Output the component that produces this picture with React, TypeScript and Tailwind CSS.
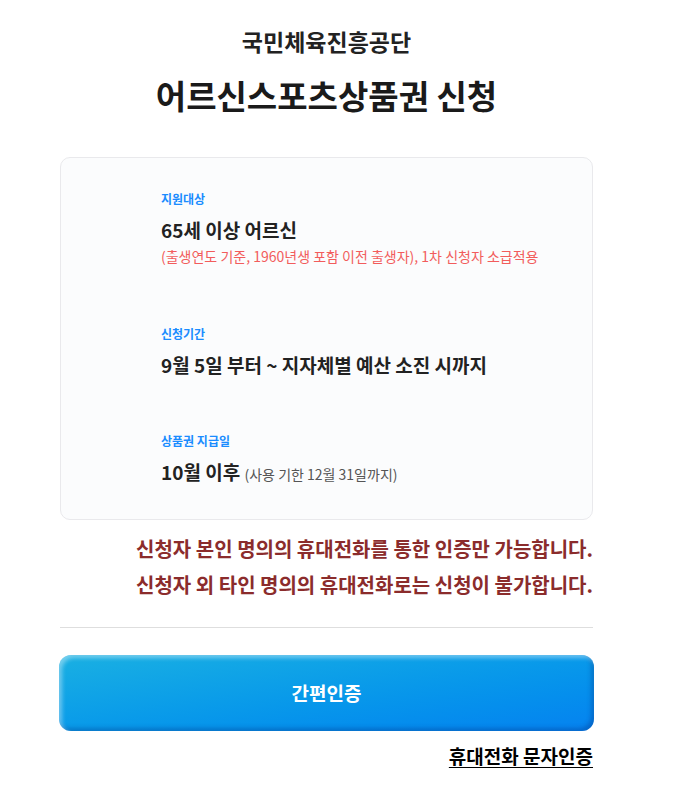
const font = { fontFamily: '"Noto Sans CJK KR", "Noto Sans", sans-serif' }

const App = () => {
  return (
    <div className="min-h-screen bg-white text-[#222]" style={font}>
      <div className="ml-[60px] w-[533px] pt-[26px] pb-[30px]">
        <h2 className="text-center text-[23px] leading-[30px] font-bold text-[#222]">국민체육진흥공단</h2>
        <h1 className="mt-[17px] text-center text-[33px] leading-[44px] font-bold text-[#1a1a1a]">
          어르신스포츠상품권 신청
        </h1>

        <div className="mt-[40px] rounded-[10px] border border-[#e9e9ec] bg-[#fbfcfd] pt-[32px] pb-[32px] pl-[100px]">
          <div>
            <p className="text-[12px] leading-[18px] font-bold text-[#1a8cff]">지원대상</p>
            <p className="mt-[9px] text-[19px] leading-[26px] font-bold text-[#222]">65세 이상 어르신</p>
            <p className="mt-[3px] text-[14px] leading-[20px] text-[#f25c5c]">
              (출생연도 기준, 1960년생 포함 이전 출생자), 1차 신청자 소급적용
            </p>
          </div>
          <div className="mt-[59px]">
            <p className="text-[12px] leading-[18px] font-bold text-[#1a8cff]">신청기간</p>
            <p className="mt-[9px] text-[19px] leading-[26px] font-bold text-[#222]">
              9월 5일 부터 ~ 지자체별 예산 소진 시까지
            </p>
          </div>
          <div className="mt-[54px]">
            <p className="text-[12px] leading-[18px] font-bold text-[#1a8cff]">상품권 지급일</p>
            <p className="mt-[9px] text-[19px] leading-[26px] font-bold text-[#222]">
              10월 이후 <span className="text-[14px] font-normal text-[#555]">(사용 기한 12월 31일까지)</span>
            </p>
          </div>
        </div>

        <div className="mt-[11px] text-right text-[20px] leading-[36px] font-semibold text-[#8b2c2c]">
          <p>신청자 본인 명의의 휴대전화를 통한 인증만 가능합니다.</p>
          <p>신청자 외 타인 명의의 휴대전화로는 신청이 불가합니다.</p>
        </div>

        <hr className="mt-[24px] border-t border-[#dedede]" />

        <button className="mt-[27px] -mx-[1px] flex h-[76px] w-[535px] items-center justify-center rounded-[12px] bg-gradient-to-br from-[#1ab0e2] to-[#0682f0] text-[19px] font-bold text-white shadow-[inset_3px_3px_4px_rgba(255,255,255,0.4),inset_-3px_-3px_4px_rgba(0,40,120,0.3)]">
          간편인증
        </button>

        <div className="mt-[13px] text-right">
          <a href="#" className="text-[19px] leading-[24px] font-semibold text-black underline underline-offset-[3px]">
            휴대전화 문자인증
          </a>
        </div>
      </div>
    </div>
  )
}

export default App
